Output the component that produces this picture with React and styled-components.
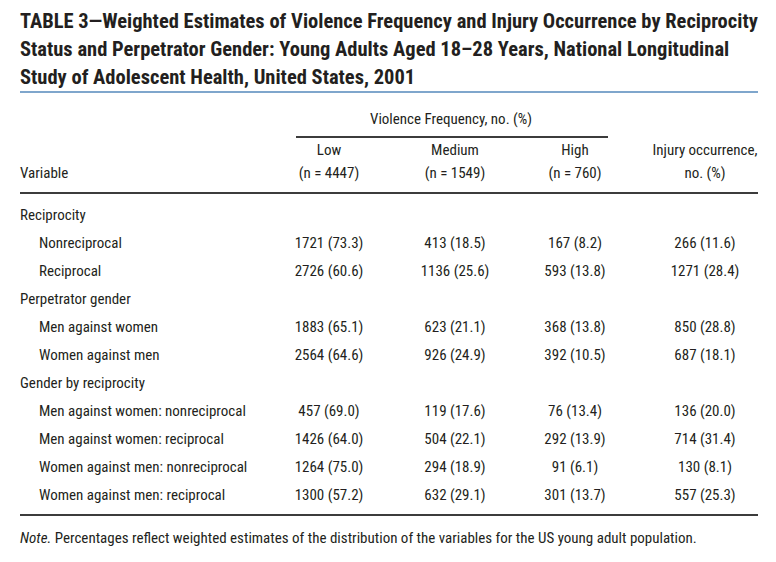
import React from 'react';
import styled, { createGlobalStyle } from 'styled-components';

const GlobalStyle = createGlobalStyle`
  body {
    margin: 0;
    background: #ffffff;
  }
`;

const ink = '#231f20';
const rule = '#3c3c3c';
const columns = '250px 118px 134px 106px 130px';

const Page = styled.div`
  width: 738px;
  padding: 0 18px 0 20px;
  font-family: Roboto, "Liberation Sans", sans-serif;
  font-stretch: 75%;
  color: ${ink};
`;

const Title = styled.h1`
  margin: 0;
  padding-top: 7px;
  font-size: 20.5px;
  font-weight: 700;
  font-stretch: 78%;
  line-height: 28px;
  white-space: nowrap;
  border-bottom: 2px solid #7fa6cc;
`;

const Head = styled.div`
  display: grid;
  grid-template-columns: ${columns};
  padding-top: 15px;
  font-size: 15px;
  line-height: 23px;
  border-bottom: 2px solid ${rule};
`;

const Spanner = styled.div`
  grid-column: 2 / 5;
  text-align: center;
  padding-left: 4px;
`;

const SpannerRule = styled.div`
  margin: 5px 20px 1px 22px;
  border-top: 2px solid ${rule};
`;

const HeadCell = styled.div`
  grid-row: 2;
  padding-bottom: 7px;
  text-align: ${({ $left }) => ($left ? 'left' : 'center')};
  padding-left: ${({ $shift }) => $shift || 0}px;
  align-self: end;
`;

const Body = styled.div`
  display: grid;
  grid-template-columns: ${columns};
  padding: 7px 0 5px;
  font-size: 15px;
  line-height: 28px;
  border-bottom: 2px solid ${rule};
`;

const Group = styled.div`
  grid-column: 1 / -1;
`;

const Label = styled.div`
  padding-left: 19px;
  white-space: nowrap;
`;

const Value = styled.div`
  text-align: center;
  padding-left: ${({ $shift }) => $shift || 0}px;
`;

const Note = styled.p`
  margin: 0;
  padding-top: 12px;
  font-size: 15px;
  line-height: 20px;

  em {
    font-style: italic;
  }
`;

const groups = [
  {
    name: 'Reciprocity',
    rows: [
      ['Nonreciprocal', '1721 (73.3)', '413 (18.5)', '167 (8.2)', '266 (11.6)'],
      ['Reciprocal', '2726 (60.6)', '1136 (25.6)', '593 (13.8)', '1271 (28.4)'],
    ],
  },
  {
    name: 'Perpetrator gender',
    rows: [
      ['Men against women', '1883 (65.1)', '623 (21.1)', '368 (13.8)', '850 (28.8)'],
      ['Women against men', '2564 (64.6)', '926 (24.9)', '392 (10.5)', '687 (18.1)'],
    ],
  },
  {
    name: 'Gender by reciprocity',
    rows: [
      ['Men against women: nonreciprocal', '457 (69.0)', '119 (17.6)', '76 (13.4)', '136 (20.0)'],
      ['Men against women: reciprocal', '1426 (64.0)', '504 (22.1)', '292 (13.9)', '714 (31.4)'],
      ['Women against men: nonreciprocal', '1264 (75.0)', '294 (18.9)', '91 (6.1)', '130 (8.1)'],
      ['Women against men: reciprocal', '1300 (57.2)', '632 (29.1)', '301 (13.7)', '557 (25.3)'],
    ],
  },
];

const App = () => (
  <Page>
    <GlobalStyle />
    <Title>
      TABLE 3—Weighted Estimates of Violence Frequency and Injury Occurrence by Reciprocity
      <br />
      Status and Perpetrator Gender: Young Adults Aged 18–28 Years, National Longitudinal
      <br />
      Study of Adolescent Health, United States, 2001
    </Title>

    <Head>
      <Spanner>
        Violence Frequency, no. (%)
        <SpannerRule />
      </Spanner>
      <HeadCell $left>Variable</HeadCell>
      <HeadCell>Low<br />(n = 4447)</HeadCell>
      <HeadCell>Medium<br />(n = 1549)</HeadCell>
      <HeadCell>High<br />(n = 760)</HeadCell>
      <HeadCell $shift={24}>Injury occurrence,<br />no. (%)</HeadCell>
    </Head>

    <Body>
      {groups.map((group) => (
        <React.Fragment key={group.name}>
          <Group>{group.name}</Group>
          {group.rows.map(([label, low, medium, high, injury]) => (
            <React.Fragment key={label}>
              <Label>{label}</Label>
              <Value>{low}</Value>
              <Value>{medium}</Value>
              <Value>{high}</Value>
              <Value $shift={24}>{injury}</Value>
            </React.Fragment>
          ))}
        </React.Fragment>
      ))}
    </Body>

    <Note>
      <em>Note.</em> Percentages reflect weighted estimates of the distribution of the variables for the US young adult population.
    </Note>
  </Page>
);

export default App;
